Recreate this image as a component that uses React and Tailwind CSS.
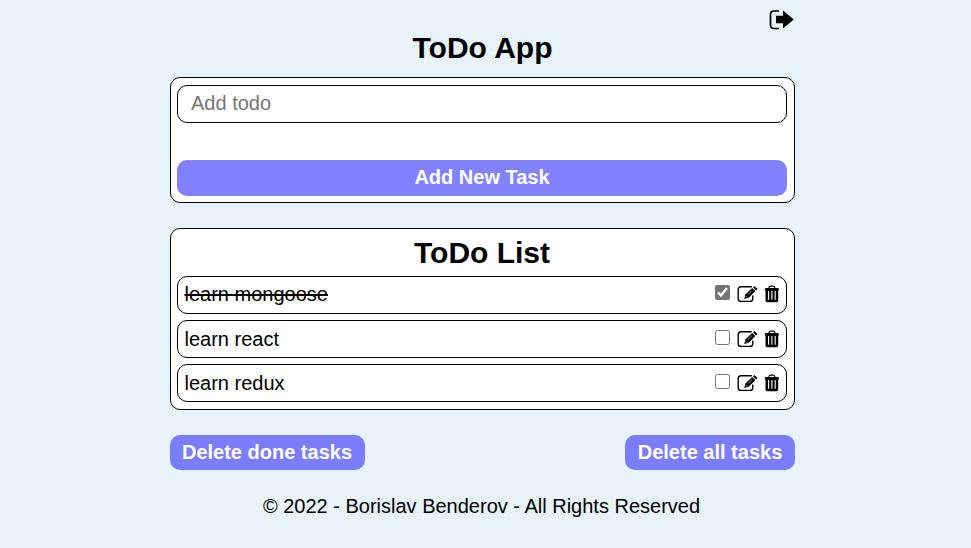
import React from 'react';

const tasks = [
  { id: 1, title: 'learn mongoose', done: true },
  { id: 2, title: 'learn react', done: false },
  { id: 3, title: 'learn redux', done: false },
];

function ExitIcon() {
  return (
    <svg className="block" width="26" height="20" viewBox="0 0 26 20" fill="none">
      <path d="M10 1H5Q1.500 1 1.500 4.500V15Q1.500 18.500 5 18.500H10" stroke="#000" strokeWidth="1.700" />
      <path d="M7 5.700H14V0.500L24.800 9.500L14 18.500V13.200H7Z" fill="#000" />
    </svg>
  );
}

function EditIcon() {
  return (
    <svg className="block" width="21" height="18" viewBox="0 0 21 18" fill="none">
      <path d="M14.800 1.700H4Q1.200 1.700 1.200 4.500V13.700Q1.200 16.400 4 16.400H13Q15.800 16.400 15.800 13.700V10.500" stroke="#000" strokeWidth="1.400" />
      <path d="M7.200 14L8.400 9.500L15.200 2.900L18.400 6.100L11.700 12.800Z" fill="#000" />
      <path d="M16 2.300L17.400 1L20.500 3.900L19 5.500Z" fill="#000" />
      <path d="M11 9.500L14.900 5.700" stroke="#fff" strokeWidth="0.600" />
      <path d="M8.800 11.300L10 12.500" stroke="#fff" strokeWidth="0.800" />
    </svg>
  );
}

function TrashIcon() {
  return (
    <svg className="block" width="16" height="18" viewBox="0 0 16 18" fill="none">
      <path d="M4.800 3.200Q5 1.200 6.500 1.200H9.200Q10.700 1.200 10.900 3.200" stroke="#000" strokeWidth="1.300" />
      <path d="M0.500 5.200Q0.700 3 2.200 3H13.500Q15 3 15.200 5.200Z" fill="#000" />
      <path d="M1.500 5H14.200V15.500Q14.200 17.200 12.500 17.200H3.200Q1.500 17.200 1.500 15.500Z" fill="#000" />
      <path d="M4.600 6V14.700M7.900 6V14.700M11.200 6V14.700" stroke="#fff" strokeWidth="1.100" />
    </svg>
  );
}

function Task({ task }) {
  return (
    <li className="flex h-[38px] items-center rounded-[10px] border border-black pr-[6px] pl-[6.500px]">
      <span className={task.done ? 'flex-1 pb-[2px] line-through' : 'flex-1'}>{task.title}</span>
      <div className={task.done ? 'flex items-center pb-[3px]' : 'flex items-center pb-px'}>
        <input type="checkbox" defaultChecked={task.done} className="mr-[7px] mb-[2px] h-[15px] w-[15px] accent-[#767676]" />
        <button className="mr-[6px]"><EditIcon /></button>
        <button><TrashIcon /></button>
      </div>
    </li>
  );
}

export default function App() {
  return (
    <div className="min-h-[548px] bg-[#e7f3f8] pr-[6px] font-['Liberation_Sans',Arial,sans-serif] text-[20px] leading-[23px] text-black">
      <div className="mx-auto w-[625px] pt-[10px]">
        <header>
          <div className="flex h-[20px] justify-end"><button><ExitIcon /></button></div>
          <h1 className="h-[47px] text-center text-[30px] leading-[35px] font-bold">ToDo App</h1>
        </header>
        <form className="h-[126px] rounded-[10px] border border-black bg-white pt-[7px] pr-[7px] pl-[6px]" onSubmit={(e) => e.preventDefault()}>
          <input placeholder="Add todo" className="block h-[38px] w-full rounded-[10px] border border-black px-[13px] pb-[2px] placeholder:text-[#757575]" />
          <button className="mt-[37px] block h-[36px] w-full rounded-[10px] bg-[#8282ff] pb-[2px] font-bold text-white">Add New Task</button>
        </form>
        <section className="mt-[25px] h-[182px] rounded-[10px] border border-black bg-white pt-[6px] pr-[7px] pl-[6px]">
          <h2 className="h-[41px] text-center text-[30px] leading-[35px] font-bold">ToDo List</h2>
          <ul className="flex flex-col gap-[6px]">
            {tasks.map((task) => <Task key={task.id} task={task} />)}
          </ul>
        </section>
        <div className="mt-[25px] flex justify-between">
          <button className="h-[35px] w-[195px] rounded-[10px] bg-[#7b7dfc] pr-px font-bold text-white">Delete done tasks</button>
          <button className="h-[35px] w-[170px] rounded-[10px] bg-[#7b7dfc] font-bold text-white">Delete all tasks</button>
        </div>
        <footer className="pt-[25px] pr-[2px] text-center">© 2022 - Borislav Benderov - All Rights Reserved</footer>
      </div>
    </div>
  );
}
